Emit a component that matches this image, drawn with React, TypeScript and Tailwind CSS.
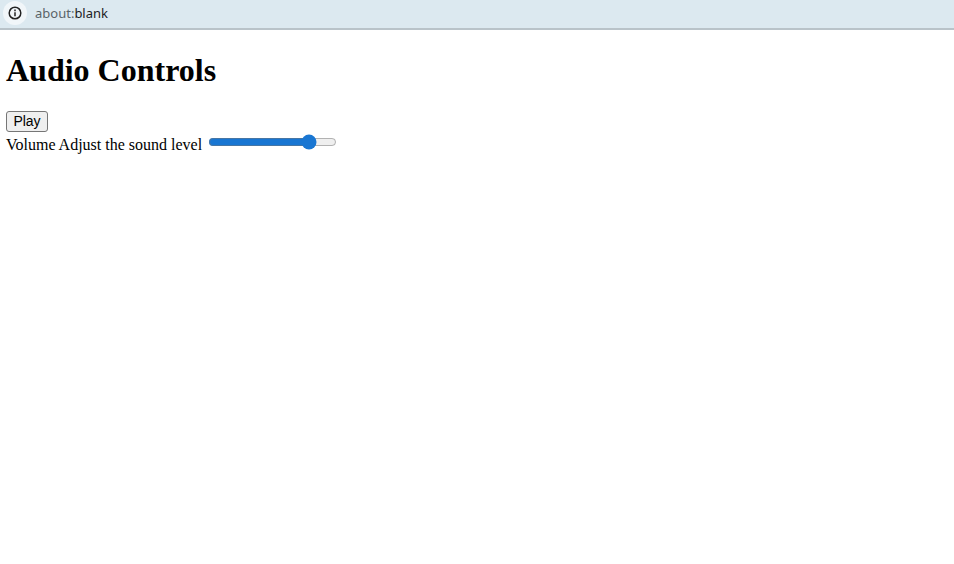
const App = () => {
  return (
    <div className="min-h-[564px] bg-white font-['Liberation_Serif',serif] text-black">
      {/* browser address bar */}
      <div className="flex h-[30px] items-center border-b-2 border-[#b9c3c9] bg-[#dce9f0] pb-[2px]">
        <div className="ml-[3px] flex h-6 w-6 items-center justify-center rounded-full bg-[#f1f6f9]">
          <svg width="14" height="14" viewBox="0 0 14 14" fill="none" stroke="#222" strokeWidth="1.5">
            <circle cx="7" cy="7" r="5.8" />
            <path d="M7 6.2v4" />
            <path d="M7 3.6v1.6" />
          </svg>
        </div>
        <span className="mt-px ml-2 font-['Noto_Sans',sans-serif] text-[13px]">
          <span className="text-[#5a6468]">about:</span>
          <span className="text-[#1c2124]">blank</span>
        </span>
      </div>
      <div className="px-1.5">
        <h1 className="mt-[22px] mb-[22px] text-[32px] leading-[37px] font-bold">Audio Controls</h1>
        <div className="flex">
          <button className="h-[21px] w-[42px] rounded-[3px] border border-[#767676] bg-[#efefef] pb-px font-['Liberation_Sans',sans-serif] text-sm leading-none text-black">
            Play
          </button>
        </div>
        <div className="flex h-[25px] items-start leading-[25px]">
          <span>Volume Adjust the sound level</span>
          <input
            type="range"
            defaultValue={82}
            className="mt-[2px] ml-[6px] w-[129px] accent-[#1976d2]"
          />
        </div>
      </div>
    </div>
  )
}

export default App
